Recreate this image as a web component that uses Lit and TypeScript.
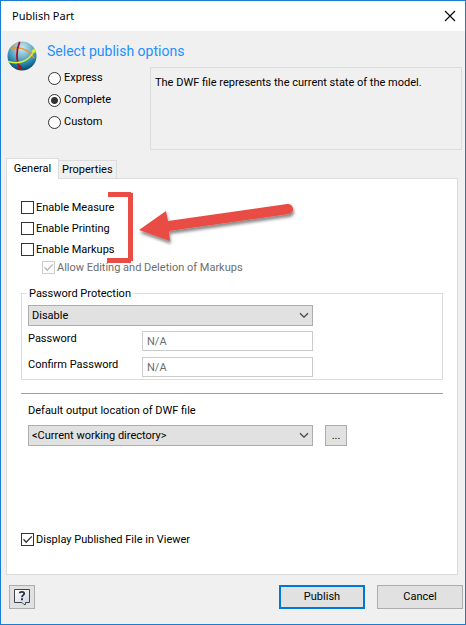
import { LitElement, html, css, svg } from "lit";
import { customElement, property, state } from "lit/decorators.js";

@customElement("tick-box")
class TickBox extends LitElement {
  @property() label = "";
  @property({ type: Boolean }) checked = false;
  @property({ type: Boolean }) disabled = false;

  static styles = css`
    :host { display: block; }
    .row { display: flex; align-items: center; gap: 2px; height: 100%; width: max-content; }
    .box { display: grid; width: 13px; height: 13px; }
    .input, .mark { grid-area: 1 / 1; width: 13px; height: 13px; }
    .input { appearance: none; margin: 0; box-sizing: border-box; border: 1px solid #333; background: #fff; }
    .input:disabled { border-color: #ccc; }
    .mark { pointer-events: none; fill: none; stroke: #333; stroke-width: 1.3; z-index: 1; }
    .input:disabled + .mark { stroke: #b4b4b4; }
    .text { white-space: nowrap; }
    .text.off { color: #6d6d6d; }
  `;

  render() {
    return html`<label class="row">
      <span class="box">
        <input class="input" type="checkbox" .checked=${this.checked} ?disabled=${this.disabled}
          @change=${(e: Event) => (this.checked = (e.target as HTMLInputElement).checked)} />
        <svg class="mark" viewBox="0 0 13 13">${this.checked ? svg`<path d="M2.5 6.3 5.2 9.2 10.8 3.4" />` : null}</svg>
      </span>
      <span class="text ${this.disabled ? "off" : ""}">${this.label}</span>
    </label>`;
  }
}

@customElement("app-root")
class AppRoot extends LitElement {
  @state() private mode = "Complete";

  static styles = css`
    :host {
      display: block;
      font: 11px/14px Roboto, "Liberation Sans", sans-serif;
      color: #000;
    }
    * { box-sizing: border-box; }
    button, input, select { font: inherit; color: inherit; }
    .window {
      display: flex; flex-direction: column; min-height: 100vh;
      background: #f0f0f0; border: 1px solid #1a7dd2;
    }
    .titlebar {
      display: flex; align-items: center; justify-content: space-between;
      height: 30px; padding: 0 9px 0 11px; background: #fff;
    }
    .title { margin: 0; font: 11px/16px "Noto Sans", sans-serif; }
    .close { display: flex; padding: 0; border: 0; background: none; }
    .close svg { width: 12px; height: 12px; stroke: #000; stroke-width: 1.1; fill: none; }

    .header {
      display: grid; grid-template-columns: 30px 93px minmax(0, 1fr); grid-template-rows: 26px auto;
      column-gap: 10px; padding: 10px 3px 8px 6px;
    }
    .logo { width: 30px; height: 30px; }
    .heading { grid-column: 2 / 4; grid-row: 1; margin: 0; font-size: 14px; line-height: 20px; font-weight: 400; color: #1e90ff; }
    .modes { grid-column: 2; grid-row: 2; display: flex; flex-direction: column; }
    .mode { display: flex; align-items: center; gap: 3px; height: 22px; }
    .radio {
      appearance: none; margin: 0 0 0 1px; width: 13px; height: 13px;
      border: 1px solid #333; border-radius: 50%; background: #fff;
    }
    .radio:checked { background: radial-gradient(circle, #333 3px, #fff 4px); }
    .note { grid-column: 3; grid-row: 2; min-height: 83px; margin: 0; padding: 8px 4px; border: 1px solid #dcdcdc; }

    .tabs { display: flex; align-items: flex-end; padding-left: 5px; }
    .tab { min-width: 57px; height: 18px; padding: 0 3px; border: 1px solid #dcdcdc; border-left: 0; border-bottom: 0; background: #f0f0f0; }
    .tab.active { position: relative; z-index: 1; min-width: 53px; height: 21px; margin-bottom: -1px; padding: 0 6px 1px; border-left: 1px solid #dcdcdc; background: #fff; }
    .panel {
      flex: 1; display: flex; flex-direction: column;
      margin: 0 7px 0 5px; padding: 18px 14px 24px; background: #fff; border: 1px solid #dcdcdc;
    }
    .checks { position: relative; }
    .tick { height: 21px; }
    .sub { height: 15px; margin-left: 21px; }
    .callout { position: absolute; left: 84px; top: -8px; width: 200px; height: 80px; overflow: visible; pointer-events: none; }

    .group { min-width: 0; margin: 12px 0 0; padding: 5px 6px 2px; border: 1px solid #dcdcdc; }
    .legend { margin-left: -1px; padding: 0 2px; line-height: 13px; }
    .pick { position: relative; display: block; width: 100%; max-width: 285px; }
    .select {
      appearance: none; display: block; width: 100%; height: 21px; padding: 0 20px 0 3px;
      border: 1px solid #adadad; border-radius: 0; background: #e1e1e1;
    }
    .chevron { position: absolute; right: 4px; top: 7px; width: 10px; height: 7px; fill: none; stroke: #444; stroke-width: 1.3; pointer-events: none; }
    .fields { display: grid; grid-template-columns: 114px minmax(0, 1fr); row-gap: 6px; max-width: 285px; margin-top: 5px; }
    .field-label { line-height: 16px; }
    .field { width: 100%; height: 20px; padding: 0 4px; border: 1px solid #ccc; background: #fff; }
    .field:disabled { color: #6d6d6d; }
    .rule { width: 100%; margin: 13px 0 9px; border: 0; border-top: 1px solid #a0a0a0; }
    .output { display: grid; grid-template-columns: minmax(0, 285px) 22px; column-gap: 12px; row-gap: 6px; padding-left: 7px; }
    .output-label { grid-column: 1 / 3; line-height: 16px; }
    .button { padding: 0; border: 1px solid #adadad; background: #e1e1e1; }
    .viewer { margin-top: auto; }

    .footer { display: flex; gap: 12px; padding: 10px 2px 15px 8px; }
    .footer .button { width: 86px; height: 24px; }
    .footer .help { width: 26px; margin-right: auto; display: flex; align-items: center; justify-content: center; }
    .help svg { width: 16px; height: 16px; }
    .footer .primary { border: 2px solid #0078d7; }
  `;

  private chevron = () => html`<svg class="chevron" viewBox="0 0 10 7"><path d="M1 1.2 5 5.2 9 1.2" /></svg>`;

  render() {
    return html`
      <main class="window">
        <header class="titlebar">
          <h1 class="title">Publish Part</h1>
          <button class="close" aria-label="Close">
            <svg viewBox="0 0 12 12"><path d="M1 1 11 11M11 1 1 11" /></svg>
          </button>
        </header>

        <section class="header">
          <svg class="logo" viewBox="0 0 30 30" aria-hidden="true">
            <defs>
              <radialGradient id="ball" cx="0.5" cy="0.22" r="0.8">
                <stop offset="0" stop-color="#d3e9f1" />
                <stop offset="0.4" stop-color="#74b4cf" />
                <stop offset="0.75" stop-color="#1c7ba6" />
                <stop offset="1" stop-color="#07405f" />
              </radialGradient>
            </defs>
            <circle cx="15" cy="15" r="14.5" fill="url(#ball)" />
            <g fill="none" stroke-linecap="round">
              <path d="M6 7C14 6 22 9 27 17" stroke="#e8962e" stroke-width="1.4" />
              <path d="M12.500 1.500C9 9 9 20 13 27" stroke="#a8121f" stroke-width="1.8" />
              <path d="M1.500 20.500C12 24 22 20 27 10" stroke="#d9ee35" stroke-width="1.6" />
            </g>
            <path d="M3.500 7 8 4.500 7.500 9.500Z" fill="#e8962e" />
            <path d="M27.500 7 24 10.500 28.500 12Z" fill="#d9ee35" />
            <path d="M15.500 28.500 10 27.500 14 24Z" fill="#a8121f" />
          </svg>
          <h2 class="heading">Select publish options</h2>
          <div class="modes" role="radiogroup" aria-label="Publish options">
            ${["Express", "Complete", "Custom"].map(
              (m) => html`<label class="mode">
                <input class="radio" type="radio" name="mode" .checked=${this.mode === m} @change=${() => (this.mode = m)} />
                ${m}
              </label>`
            )}
          </div>
          <p class="note">The DWF file represents the current state of the model.</p>
        </section>

        <nav class="tabs" role="tablist">
          <button class="tab active" role="tab" aria-selected="true">General</button>
          <button class="tab" role="tab" aria-selected="false">Properties</button>
        </nav>
        <section class="panel" role="tabpanel">
          <div class="checks">
            <tick-box class="tick" label="Enable Measure"></tick-box>
            <tick-box class="tick" label="Enable Printing"></tick-box>
            <tick-box class="tick" label="Enable Markups"></tick-box>
            <tick-box class="sub" label="Allow Editing and Deletion of Markups" checked disabled></tick-box>
            <svg class="callout" viewBox="0 0 200 80" aria-hidden="true">
              <defs>
                <filter id="shade" x="-10%" y="-20%" width="120%" height="150%">
                  <feDropShadow dx="1" dy="3" stdDeviation="1.5" flood-color="#000" flood-opacity="0.45" />
                </filter>
              </defs>
              <path d="M3 3H26V4H28V72H26V74H2V69H23V8H3Z" fill="#e94b45" />
              <path d="M34 41 61 22 63 32 182 15A5 5 0 0 1 184 25L64 42 65 52Z" fill="#e94b45" filter="url(#shade)" />
            </svg>
          </div>

          <fieldset class="group">
            <legend class="legend">Password Protection</legend>
            <span class="pick">
              <select class="select" aria-label="Password Protection"><option>Disable</option></select>
              ${this.chevron()}
            </span>
            <div class="fields">
              <label class="field-label" for="password">Password</label>
              <input class="field" id="password" type="text" value="N/A" disabled />
              <label class="field-label" for="confirm">Confirm Password</label>
              <input class="field" id="confirm" type="text" value="N/A" disabled />
            </div>
          </fieldset>

          <hr class="rule" />

          <div class="output">
            <label class="output-label" for="location">Default output location of DWF file</label>
            <span class="pick">
              <select class="select" id="location"><option>&lt;Current working directory&gt;</option></select>
              ${this.chevron()}
            </span>
            <button class="button" aria-label="Browse">...</button>
          </div>

          <tick-box class="tick viewer" label="Display Published File in Viewer" checked></tick-box>
        </section>

        <footer class="footer">
          <button class="button help" aria-label="Help">
            <svg viewBox="0 0 16 16" fill="none">
              <defs>
                <linearGradient id="bubble" x1="0" y1="0" x2="1" y2="1">
                  <stop offset="0" stop-color="#fff" /><stop offset="1" stop-color="#cfd3da" />
                </linearGradient>
              </defs>
              <path d="M0.500 0.500H15.500V13.500H11.500V15.500H10L8 13.500H0.500Z" fill="url(#bubble)" stroke="#3c4350" />
              <path d="M5.700 4.300C5.800 2.300 10.200 2.300 10.200 4.500C10.200 6.200 8 6.200 8 8.200" stroke="#2c3340" stroke-width="1.800" />
              <path d="M7 9.300H9V11.200H7Z" fill="#2c3340" />
            </svg>
          </button>
          <button class="button primary">Publish</button>
          <button class="button">Cancel</button>
        </footer>
      </main>
    `;
  }
}
